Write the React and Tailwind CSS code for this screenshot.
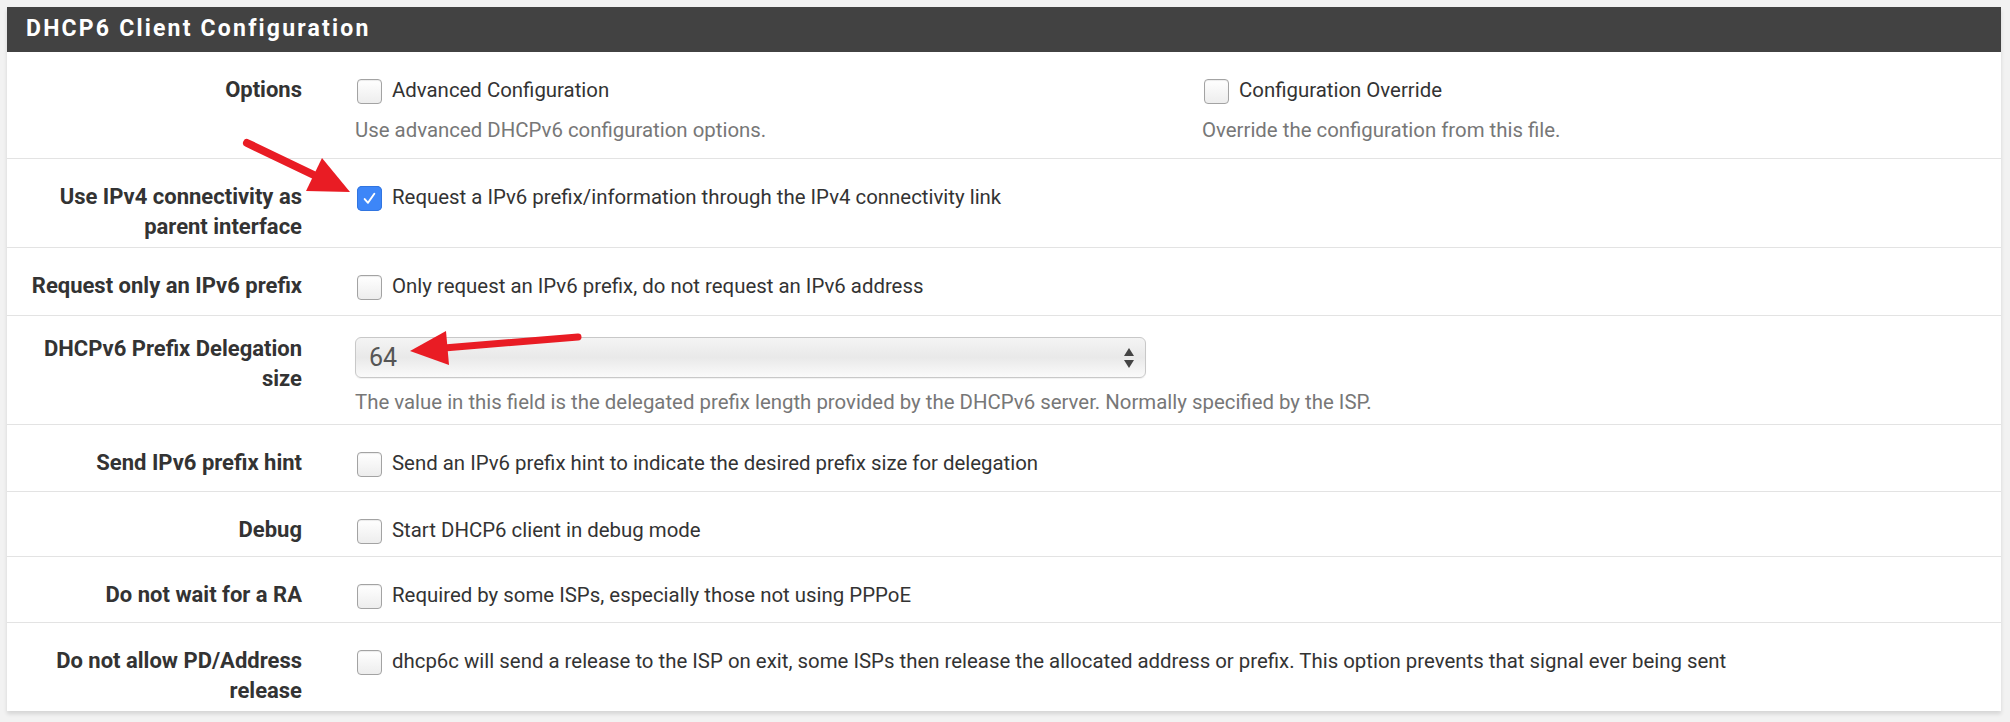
import React from 'react';

const rows = [
  {
    label: ['Options'],
    h: 'h-[106px]',
    kind: 'options',
  },
  {
    label: ['Use IPv4 connectivity as', 'parent interface'],
    h: 'h-[89px]',
    text: 'Request a IPv6 prefix/information through the IPv4 connectivity link',
    checked: true,
  },
  {
    label: ['Request only an IPv6 prefix'],
    h: 'h-[68px]',
    text: 'Only request an IPv6 prefix, do not request an IPv6 address',
  },
  {
    label: ['DHCPv6 Prefix Delegation', 'size'],
    h: 'h-[109px]',
    kind: 'select',
  },
  {
    label: ['Send IPv6 prefix hint'],
    h: 'h-[67px]',
    text: 'Send an IPv6 prefix hint to indicate the desired prefix size for delegation',
  },
  {
    label: ['Debug'],
    h: 'h-[65px]',
    text: 'Start DHCP6 client in debug mode',
  },
  {
    label: ['Do not wait for a RA'],
    h: 'h-[66px]',
    text: 'Required by some ISPs, especially those not using PPPoE',
  },
  {
    label: ['Do not allow PD/Address', 'release'],
    h: 'h-[89px]',
    text: 'dhcp6c will send a release to the ISP on exit, some ISPs then release the allocated address or prefix. This option prevents that signal ever being sent',
  },
];

const Checkbox = ({ checked }) =>
  checked ? (
    <span className="flex h-[25px] w-[25px] shrink-0 items-center justify-center rounded-[5px] bg-[#3d86f8] shadow-[inset_0_0_0_1px_#3175e0]">
      <svg width="15" height="15" viewBox="0 0 14 14" fill="none">
        <path d="M2.5 7.5 L5.6 11 L11.5 2.5" stroke="white" strokeWidth="1.8" strokeLinecap="round" strokeLinejoin="round" />
      </svg>
    </span>
  ) : (
    <span className="block h-[25px] w-[25px] shrink-0 rounded-[4px] border border-[#a3a3a3] bg-gradient-to-b from-white to-[#ededed] shadow-[inset_0_1px_1px_rgba(0,0,0,0.08)]" />
  );

const CheckLine = ({ checked, text }) => (
  <div className="flex h-[30px] items-center">
    <span className="ml-[2px] mt-[3px]">
      <Checkbox checked={checked} />
    </span>
    <span className="ml-[10px] text-[#333]">{text}</span>
  </div>
);

const Help = ({ children }) => <div className="mt-[10px] leading-[30px] text-[#777]">{children}</div>;

const Content = ({ row }) => {
  if (row.kind === 'options') {
    return (
      <div className="grid grid-cols-[847px_1fr] pt-[23px]">
        <div>
          <CheckLine text="Advanced Configuration" />
          <Help>Use advanced DHCPv6 configuration options.</Help>
        </div>
        <div>
          <CheckLine text="Configuration Override" />
          <Help>Override the configuration from this file.</Help>
        </div>
      </div>
    );
  }
  if (row.kind === 'select') {
    return (
      <div className="pt-[21px]">
        <div className="flex h-[41px] w-[791px] items-center justify-between rounded-[6px] border border-[#c8c8c8] bg-gradient-to-b from-[#f4f4f4] via-[#e9e9e9] to-[#fafafa] pl-[13px] pr-[10px] shadow-[0_1px_1px_rgba(0,0,0,0.06)]">
          <span className="text-[25px] text-[#555]">64</span>
          <svg width="12" height="22" viewBox="0 0 12 22">
            <path d="M6 1 L11 9 L1 9 Z" fill="#444" />
            <path d="M1 13 L11 13 L6 21 Z" fill="#444" />
          </svg>
        </div>
        <div className="mt-[9px] leading-[30px] text-[#777]">
          The value in this field is the delegated prefix length provided by the DHCPv6 server. Normally specified by the ISP.
        </div>
      </div>
    );
  }
  return (
    <div className="pt-[23px]">
      <CheckLine checked={row.checked} text={row.text} />
    </div>
  );
};

export default function App() {
  return (
    <div className="relative h-[722px] w-[2010px] overflow-hidden bg-[#f2f2f2] pl-[7px] pr-[9px] pt-[7px] font-['Roboto',sans-serif] text-[20.4px]">
      <div className="bg-white shadow-[0_3px_4px_rgba(0,0,0,0.12)]">
        <div className="flex h-[45px] items-center bg-[#424242] pl-[19px]">
          <h2 className="text-[23px] font-bold tracking-[2.2px] text-white">DHCP6 Client Configuration</h2>
        </div>
        {rows.map((row, i) => (
          <div
            key={i}
            className={`grid grid-cols-[295px_1fr] gap-x-[53px] ${row.h} ${i > 0 ? 'border-t border-[#e3e3e3]' : ''}`}
          >
            <div className={`text-right text-[22px] font-bold leading-[30px] text-[#333] ${row.kind === 'select' ? 'pt-[18px]' : 'pt-[23px]'}`}>
              {row.label.map((l) => (
                <div key={l}>{l}</div>
              ))}
            </div>
            <Content row={row} />
          </div>
        ))}
      </div>

      {/* annotation arrows drawn over the form */}
      <svg className="pointer-events-none absolute left-0 top-0" width="2010" height="722" viewBox="0 0 2010 722">
        <line x1="247" y1="143" x2="318" y2="177" stroke="#e91c24" strokeWidth="8" strokeLinecap="round" />
        <polygon points="350,192 306,191 322,158" fill="#e91c24" />
        <line x1="578" y1="337" x2="444" y2="348" stroke="#e91c24" strokeWidth="7" strokeLinecap="round" />
        <polygon points="410,351 446,331 449,365" fill="#e91c24" />
      </svg>
    </div>
  );
}
